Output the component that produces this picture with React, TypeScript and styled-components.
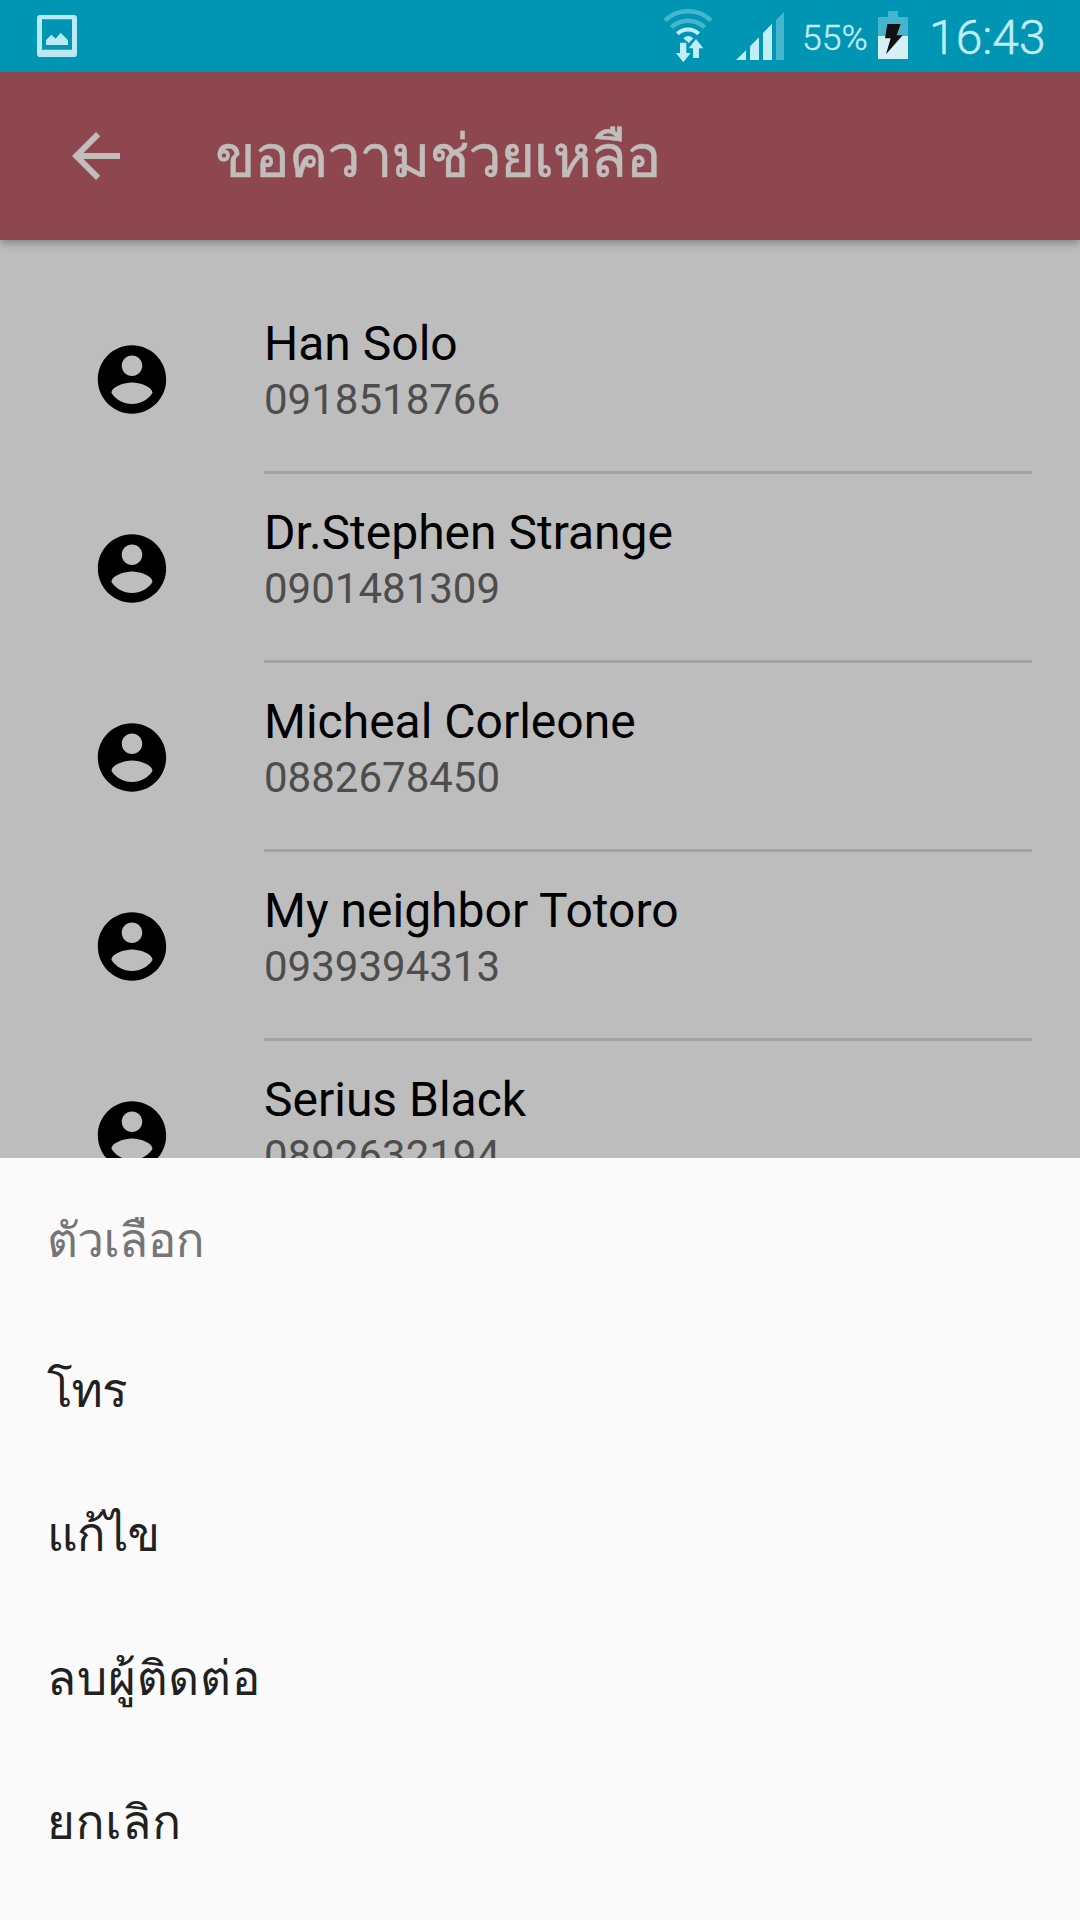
import React from "react";
import styled, { createGlobalStyle } from "styled-components";

const GlobalStyle = createGlobalStyle`
  * { box-sizing: border-box; }
  body { margin: 0; background: #fafafa; }
`;

const Screen = styled.div`
  display: flex;
  flex-direction: column;
  width: 1080px;
  height: 1920px;
  overflow: hidden;
  background: #bdbdbd;
  font-family: Roboto, Loma, "Noto Sans", sans-serif;
`;

const StatusBar = styled.header`
  display: flex;
  align-items: flex-start;
  justify-content: space-between;
  flex: none;
  height: 72px;
  padding: 0 34px 0 36px;
  background: #0095b3;
  color: #c0edf7;
  z-index: 2;
`;

const StatusIcons = styled.div`
  display: flex;
  align-items: flex-start;
`;

const Glyph = styled.svg<{ $left?: number }>`
  display: block;
  flex: none;
  margin-left: ${(p) => p.$left ?? 0}px;
`;

const Percent = styled.span`
  margin-left: 17px;
  width: 72px;
  font-size: 35.5px;
  line-height: 77px;
  font-weight: 300;
  -webkit-text-stroke: 0.4px currentColor;
  white-space: nowrap;
`;

const Clock = styled.time`
  margin-left: 21px;
  width: 117px;
  font-size: 48px;
  line-height: 76px;
  font-weight: 300;
  -webkit-text-stroke: 0.5px currentColor;
  white-space: nowrap;
`;

const Toolbar = styled.nav`
  display: flex;
  align-items: center;
  flex: none;
  height: 168px;
  padding-left: 60px;
  background: #8e474f;
  color: #c0bdbb;
  box-shadow: 0 3px 9px rgba(0, 0, 0, 0.32);
  z-index: 1;
`;

const BackButton = styled.button`
  display: flex;
  padding: 0;
  border: 0;
  background: none;
  color: inherit;
`;

const Title = styled.h1`
  margin: 0 0 0 83px;
  padding-top: 1px;
  font-size: 59.5px;
  font-weight: 400;
  line-height: 84px;
  letter-spacing: -1.35px;
  -webkit-text-stroke: 0.5px currentColor;
  white-space: nowrap;
`;

const ContactList = styled.ul`
  flex: 1;
  min-height: 0;
  margin: 0;
  padding: 45px 48px 0 91px;
  overflow: hidden;
  list-style: none;
`;

const Contact = styled.li`
  display: flex;
  align-items: center;
  height: 189px;
`;

const ContactBody = styled.div`
  display: flex;
  flex-direction: column;
  flex: 1;
  height: 100%;
  margin-left: 91px;
  padding-top: 31px;
  border-bottom: 3px solid #a3a3a3;
`;

const Name = styled.span`
  font-size: 48px;
  line-height: 56px;
  color: #000;
`;

const Phone = styled.span`
  margin-top: 3px;
  font-size: 42px;
  line-height: 49px;
  color: #4d4d4d;
`;

const Sheet = styled.section`
  display: flex;
  flex-direction: column;
  flex: none;
  height: 762px;
  padding: 12px 47px 24px;
  background: #fafafa;
`;

const SheetTitle = styled.h2`
  margin: 0;
  height: 150px;
  font-size: 47.6px;
  font-weight: 400;
  line-height: 142px;
  letter-spacing: -0.6px;
  color: #757575;
`;

const SheetOption = styled.button<{ $tracking: number }>`
  display: flex;
  height: 144px;
  padding: 0;
  border: 0;
  background: none;
  color: #212121;
  font: inherit;
  font-size: 47.6px;
  line-height: 142px;
  letter-spacing: ${(p) => p.$tracking}px;
  text-align: left;
`;

const contacts = [
  { name: "Han Solo", phone: "0918518766" },
  { name: "Dr.Stephen Strange", phone: "0901481309" },
  { name: "Micheal Corleone", phone: "0882678450" },
  { name: "My neighbor Totoro", phone: "0939394313" },
  { name: "Serius Black", phone: "0892632194" },
];

const options = [
  { label: "โทร", tracking: -1 },
  { label: "แก้ไข", tracking: -1 },
  { label: "ลบผู้ติดต่อ", tracking: 0.8 },
  { label: "ยกเลิก", tracking: 0.8 },
];

const ImageIcon = () => (
  <Glyph width="42" height="72" viewBox="0 0 126 216">
    <path
      fill="#b9e9f3"
      fillRule="evenodd"
      d="M13 45H113Q123 45 123 55V161Q123 171 113 171H13Q3 171 3 161V55Q3 45 13 45ZM18 58V149H108V58Z"
    />
    <path fill="#b9e9f3" d="M30 121L46 104L59 116L74 98L96 121V135H30Z" />
  </Glyph>
);

const WifiIcon = () => (
  <Glyph width="52" height="72" viewBox="66 0 156 216">
    <g fill="none">
      <path d="M75 61A101 101 0 0 1 213 61" stroke="#45b5cd" strokeWidth="14" />
      <path d="M94 82A73 73 0 0 1 194 82" stroke="#45b5cd" strokeWidth="13" />
      <path d="M112 101A47 47 0 0 1 176 101" stroke="#c0edf7" strokeWidth="12" />
    </g>
    <path fill="#c0edf7" d="M130 115Q144 101 160 115L146 129Z" />
    <path
      fill="#c0edf7"
      stroke="#0095b3"
      strokeWidth="6"
      paintOrder="stroke"
      d="M120 128H139V159H152L130 187L108 159H120ZM159 174H177V145H190L168 117L146 145H159Z"
    />
  </Glyph>
);

const SignalIcon = () => (
  <Glyph $left={22} width="49" height="72" viewBox="288 0 147 216">
    <g fill="#c0edf7">
      <path d="M288 180L318 151V180Z" />
      <path d="M330 180V139L357 112V180Z" />
      <path d="M369 180V99L396 71V180Z" />
    </g>
    <path fill="#45b5cd" d="M408 180V60L432 36V180Z" />
  </Glyph>
);

const BatteryIcon = () => (
  <Glyph $left={4} width="30" height="72" viewBox="714 0 90 216">
    <path fill="#45b5cd" d="M714 51H744V33H774V51H804V108H714Z" />
    <path fill="#d5f0f6" d="M714 108H804V177H714Z" />
    <path fill="#111" d="M742 72H782L770 106H788L738 163L752 115H735Z" />
  </Glyph>
);

const BackIcon = () => (
  <Glyph width="72" height="72" viewBox="0 0 24 24" fill="currentColor">
    <path d="M20 11H7.83l5.59-5.59L12 4l-8 8 8 8 1.41-1.41L7.83 13H20v-2z" />
  </Glyph>
);

const AccountIcon = () => (
  <Glyph width="82" height="82" viewBox="0 0.15 24 24" fill="#000">
    <path d="M12 2C6.48 2 2 6.48 2 12s4.48 10 10 10 10-4.48 10-10S17.52 2 12 2zm0 3c1.66 0 3 1.34 3 3s-1.34 3-3 3-3-1.34-3-3 1.34-3 3-3zm0 14.2c-2.5 0-4.71-1.28-6-3.22.03-1.99 4-3.08 6-3.08 1.99 0 5.97 1.09 6 3.08-1.29 1.94-3.5 3.22-6 3.22z" />
  </Glyph>
);

export default function App() {
  return (
    <>
      <GlobalStyle />
      <Screen>
        <StatusBar>
          <ImageIcon />
          <StatusIcons>
            <WifiIcon />
            <SignalIcon />
            <Percent>55%</Percent>
            <BatteryIcon />
            <Clock>16:43</Clock>
          </StatusIcons>
        </StatusBar>
        <Toolbar>
          <BackButton>
            <BackIcon />
          </BackButton>
          <Title>ขอความช่วยเหลือ</Title>
        </Toolbar>
        <ContactList>
          {contacts.map((c) => (
            <Contact key={c.phone}>
              <AccountIcon />
              <ContactBody>
                <Name>{c.name}</Name>
                <Phone>{c.phone}</Phone>
              </ContactBody>
            </Contact>
          ))}
        </ContactList>
        <Sheet>
          <SheetTitle>ตัวเลือก</SheetTitle>
          {options.map((o) => (
            <SheetOption key={o.label} $tracking={o.tracking}>
              {o.label}
            </SheetOption>
          ))}
        </Sheet>
      </Screen>
    </>
  );
}
